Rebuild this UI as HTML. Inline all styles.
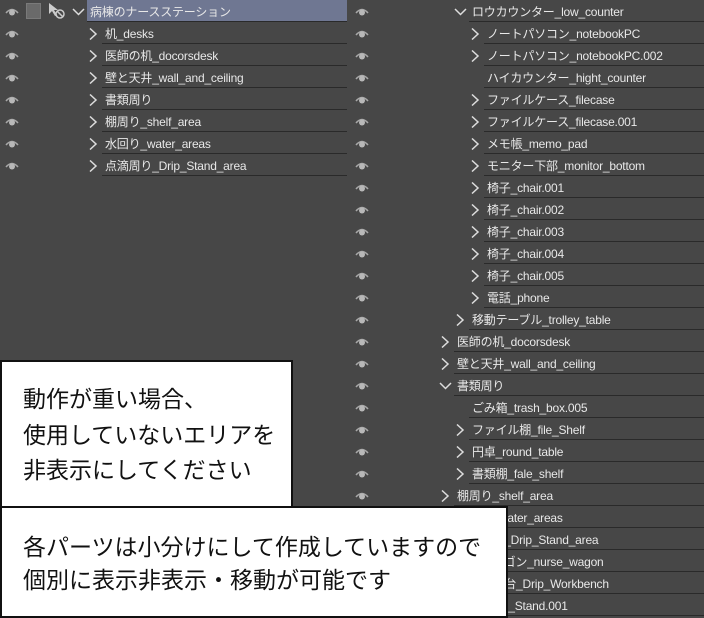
<!DOCTYPE html>
<html><head><meta charset="utf-8"><style>
html,body{margin:0;padding:0}
body{width:704px;height:616px;background:#474747;position:relative;overflow:hidden;font-family:"Liberation Sans","Noto Sans CJK JP",sans-serif;font-size:12px;color:#e8e8e8}
.r{position:absolute;height:22px;line-height:24px;white-space:nowrap;letter-spacing:-0.2px}
.ln{position:absolute;height:1px;background:#2a2a2a}
.eye{position:absolute;width:14px;height:9px}
.ch{position:absolute;width:10px;height:12px}
.box{position:absolute;background:#fff;border:2px solid #111;color:#111;font-size:23px;box-sizing:border-box}
</style></head><body>
<div style="position:absolute;left:87px;top:0;width:260px;height:21px;background:#6f7792"></div>
<div id="c"></div>
<div class="box" style="left:0;top:360px;width:293px;height:148px;padding:20px 0 0 21px;line-height:35.5px">動作が重い場合、<br>使用していないエリアを<br>非表示にしてください</div>
<div class="box" style="left:0;top:506px;width:508px;height:112px;padding:23px 0 0 21px;line-height:33px">各パーツは小分けにして作成していますので<br>個別に表示非表示・移動が可能です</div>
<script>
var c=document.getElementById('c'),h='';
function eye(x,y){return '<svg class="eye" style="left:'+x+'px;top:'+y+'px" viewBox="0 0 14 9"><path d="M1 6Q7 -1 13 6" stroke="#a8a8a8" stroke-width="1.5" fill="none"/><circle cx="7" cy="5.5" r="3" fill="#b8b8b8"/></svg>';}
function chev(x,y,open){return open?'<svg class="ch" style="left:'+(x-2)+'px;top:'+(y+6)+'px;width:13px" viewBox="0 0 13 12"><path d="M1 3L6.5 8.5L12 3" stroke="#ddd" stroke-width="1.5" fill="none"/></svg>':'<svg class="ch" style="left:'+(x-1)+'px;top:'+(y+6)+'px" viewBox="0 0 10 12"><path d="M2 0.5L8 6L2 11.5" stroke="#ddd" stroke-width="1.5" fill="none"/></svg>';}
function row(i,ex,tx,right,txt,ch){var y=22*i;h+=eye(ex,y+7);if(ch)h+=chev(tx-16,y,ch==2);h+='<div class="r" style="left:'+tx+'px;top:'+y+'px">'+txt+'</div>';h+='<div class="ln" style="left:'+(tx-3)+'px;top:'+(y+21)+'px;width:'+(right-tx+3)+'px"></div>';}
var L=[['病棟のナースステーション',2,90],['机_desks',1,105],['医師の机_docorsdesk',1,105],['壁と天井_wall_and_ceiling',1,105],['書類周り',1,105],['棚周り_shelf_area',1,105],['水回り_water_areas',1,105],['点滴周り_Drip_Stand_area',1,105]];
L.forEach(function(a,i){row(i,5,a[2],347,a[0],a[1]);});
h+='<div style="position:absolute;left:26px;top:3px;width:13px;height:14px;background:#6a6a6a;border:1px solid #7a7a7a"></div>';
h+='<svg style="position:absolute;left:48px;top:2px" width="18" height="18" viewBox="0 0 18 18"><path d="M1 1L1 12L4 9L7 14L9 13L6 8L10 8Z" fill="#ccc"/><circle cx="12" cy="12" r="4" stroke="#ccc" stroke-width="1.5" fill="none"/><path d="M9 9L15 15" stroke="#ccc" stroke-width="1.5"/></svg>';
var R=[['ロウカウンター_low_counter',1,2],['ノートパソコン_notebookPC',2,1],['ノートパソコン_notebookPC.002',2,1],['ハイカウンター_hight_counter',2,0],['ファイルケース_filecase',2,1],['ファイルケース_filecase.001',2,1],['メモ帳_memo_pad',2,1],['モニター下部_monitor_bottom',2,1],['椅子_chair.001',2,1],['椅子_chair.002',2,1],['椅子_chair.003',2,1],['椅子_chair.004',2,1],['椅子_chair.005',2,1],['電話_phone',2,1],['移動テーブル_trolley_table',1,1],['医師の机_docorsdesk',0,1],['壁と天井_wall_and_ceiling',0,1],['書類周り',0,2],['ごみ箱_trash_box.005',1,0],['ファイル棚_file_Shelf',1,1],['円卓_round_table',1,1],['書類棚_fale_shelf',1,1],['棚周り_shelf_area',0,1],['水回り_water_areas',0,1],['点滴周り_Drip_Stand_area',0,1],['ナースワゴン_nurse_wagon',0,1],['点滴作業台_Drip_Workbench',0,1],['点滴_Drip_Stand.001',0,1]];
R.forEach(function(a,i){row(i,355,457+15*a[1],704,a[0],a[2]);});
c.innerHTML=h;
</script>
</body></html>
